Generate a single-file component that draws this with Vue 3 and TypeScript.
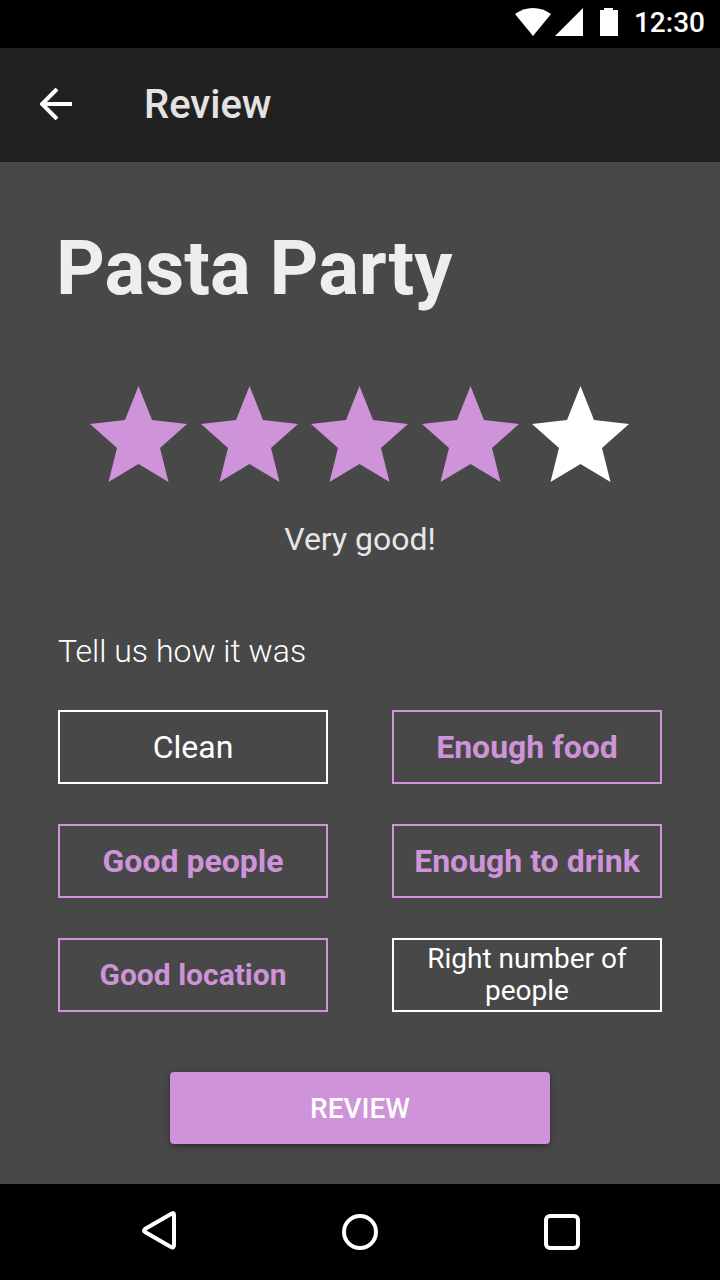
<script setup lang="ts">
import { ref } from 'vue'

interface Tag {
  id: string
  label: string
  selected: boolean
  size?: 'medium' | 'small'
}

const rating = ref(4)
const verdicts = ['Terrible', 'Poor', 'Okay', 'Very good!', 'Excellent!']

const tags = ref<Tag[]>([
  { id: 'clean', label: 'Clean', selected: false },
  { id: 'food', label: 'Enough food', selected: true },
  { id: 'people', label: 'Good people', selected: true },
  { id: 'drink', label: 'Enough to drink', selected: true },
  { id: 'location', label: 'Good location', selected: true, size: 'medium' },
  { id: 'number', label: 'Right number of people', selected: false, size: 'small' },
])
</script>

<template>
  <div class="screen">
    <div class="status">
      <svg class="wifi" width="36" height="28" viewBox="0 0 36 28" aria-hidden="true">
        <path d="M0 6 Q8 0 18 0 Q28 0 36 6 L18 28 Z" />
      </svg>
      <svg class="signal" width="28" height="28" viewBox="0 0 28 28" aria-hidden="true">
        <path d="M28 0 V28 H0 Z" />
      </svg>
      <svg class="battery" width="18" height="28" viewBox="0 0 18 28" aria-hidden="true">
        <path d="M4 0 H13 V2 H18 V28 H0 V2 H4 Z" />
      </svg>
      <time class="clock">12:30</time>
    </div>

    <header class="bar">
      <button class="back" type="button" aria-label="Back">
        <svg width="32" height="32" viewBox="0 0 32 32" aria-hidden="true">
          <path d="M32 16 H3 M17 1 L2 16 L17 31" />
        </svg>
      </button>
      <span class="bar-title">Review</span>
    </header>

    <main class="content">
      <h1 class="title">Pasta Party</h1>

      <div class="stars" role="radiogroup" aria-label="Rating">
        <label v-for="n in 5" :key="n" class="star" :class="{ on: n <= rating }">
          <input v-model="rating" class="hidden-input" type="radio" name="rating" :value="n" :aria-label="`${n} stars`" />
          <svg width="98" height="96" viewBox="0 0 98 96" aria-hidden="true">
            <path d="M48.500 0 L62 34 L97 38 L70 62 L78.500 96 L48.500 78 L18.500 96 L27 62 L0 38 L35 34 Z" />
          </svg>
        </label>
      </div>
      <p class="verdict">{{ verdicts[rating - 1] }}</p>

      <h2 class="prompt">Tell us how it was</h2>
      <div class="tags">
        <label v-for="tag in tags" :key="tag.id" class="tag" :class="[tag.size, { on: tag.selected }]">
          <input v-model="tag.selected" class="hidden-input" type="checkbox" />
          <span>{{ tag.label }}</span>
        </label>
      </div>

      <button class="submit" type="button">REVIEW</button>
    </main>

    <nav class="system" aria-label="System">
      <button type="button" aria-label="Back">
        <svg width="36" height="40" viewBox="0 0 36 40" aria-hidden="true">
          <path d="M34 5 Q34 2 31 4 L5 19 Q3 20.500 5 22 L31 37 Q34 38.500 34 35 Z" />
        </svg>
      </button>
      <button type="button" aria-label="Home">
        <svg width="36" height="40" viewBox="0 0 36 40" aria-hidden="true">
          <circle cx="18" cy="22" r="16" />
        </svg>
      </button>
      <button type="button" aria-label="Recent apps">
        <svg width="36" height="40" viewBox="0 0 36 40" aria-hidden="true">
          <rect x="2" y="6" width="32" height="32" rx="4" />
        </svg>
      </button>
    </nav>
  </div>
</template>

<style>
body {
  margin: 0;
  background: #484848;
}
</style>

<style scoped>
.screen {
  display: flex;
  flex-direction: column;
  min-height: 100vh;
  background: #484848;
  color: #fff;
  font-family: Roboto, "Liberation Sans", sans-serif;
}

button {
  padding: 0;
  border: 0;
  background: none;
  color: inherit;
  font-family: inherit;
  cursor: pointer;
}

svg {
  display: block;
}

.status {
  display: flex;
  align-items: center;
  justify-content: flex-end;
  box-sizing: border-box;
  height: 48px;
  padding: 0 15px 2px;
  background: #000;
}

.status svg {
  margin-bottom: 2px;
  fill: #fff;
}

.signal {
  margin-left: 4px;
}

.battery {
  margin: 0 16px 0 17px;
}

.clock {
  font-size: 28px;
  font-weight: 500;
  line-height: 44px;
}

.bar {
  display: flex;
  align-items: center;
  box-sizing: border-box;
  height: 114px;
  padding: 0 40px;
  gap: 72px;
  background: #212121;
}

.back svg {
  margin-bottom: 2px;
  fill: none;
  stroke: #fff;
  stroke-width: 4;
}

.bar-title {
  color: #e3e3e3;
  font-size: 40px;
  font-weight: 500;
  line-height: 48px;
}

.content {
  display: flex;
  flex: 1;
  flex-direction: column;
  padding: 62px 58px 40px;
}

.title {
  margin: 0 0 74px -2px;
  color: #eee;
  font-size: 76px;
  font-weight: 700;
  line-height: 88px;
}

.stars {
  display: flex;
  justify-content: space-between;
  margin: 0 32px;
}

.star {
  position: relative;
  fill: #fff;
  cursor: pointer;
}

.star.on {
  fill: #ce93d8;
}

.hidden-input {
  position: absolute;
  inset: 0;
  width: 100%;
  height: 100%;
  margin: 0;
  opacity: 0;
  cursor: pointer;
}

.verdict {
  margin: 37px 0 72px;
  color: #e6e6e6;
  font-size: 32px;
  line-height: 40px;
  text-align: center;
}

.prompt {
  margin: 0 0 39px;
  font-size: 32px;
  font-weight: 300;
  line-height: 40px;
}

.tags {
  display: grid;
  grid-template-columns: 1fr 1fr;
  gap: 40px 64px;
}

.tag {
  position: relative;
  display: flex;
  align-items: center;
  justify-content: center;
  box-sizing: border-box;
  min-height: 74px;
  padding: 0 16px;
  border: 2px solid #fff;
  font-size: 32px;
  line-height: 32px;
  text-align: center;
}

.tag.on {
  border-color: #ce93d8;
  color: #ce93d8;
  font-weight: 700;
}

.tag.medium {
  font-size: 30px;
}

.tag.small {
  font-size: 28px;
}

.submit {
  align-self: center;
  width: 63%;
  height: 72px;
  margin-top: 60px;
  border-radius: 4px;
  background: #ce93d8;
  box-shadow: 0 2px 6px rgba(0, 0, 0, 0.4);
  font-size: 28px;
  font-weight: 500;
}

.system {
  display: flex;
  align-items: center;
  justify-content: center;
  box-sizing: border-box;
  height: 96px;
  padding-bottom: 4px;
  gap: 166px;
  background: #000;
}

.system svg {
  fill: none;
  stroke: #fff;
  stroke-width: 4;
}
</style>
